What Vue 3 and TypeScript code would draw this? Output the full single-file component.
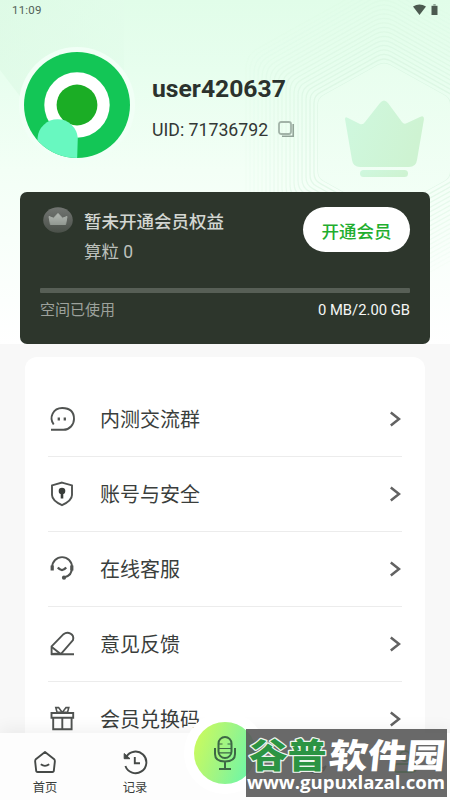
<script setup lang="ts">
interface MenuItem {
  label: string
  icon: string
}

const menu: MenuItem[] = [
  { label: '内测交流群', icon: 'chat' },
  { label: '账号与安全', icon: 'shield' },
  { label: '在线客服', icon: 'support' },
  { label: '意见反馈', icon: 'pencil' },
  { label: '会员兑换码', icon: 'gift' },
]

const rings = Array.from({ length: 19 }, (_, i) => ({
  scale: 1 + (i * 4) / 66,
  opacity: 0.5 - i * 0.024,
  stroke: 1.3 / (1 + (i * 4) / 66),
}))
</script>

<template>
  <div class="screen">
    <header class="hero">
      <svg class="backdrop" width="450" height="344" viewBox="0 0 450 344">
        <defs>
          <linearGradient id="slab" x1="0" y1="0" x2="0" y2="1">
            <stop offset="0" stop-color="#e0fae7" />
            <stop offset="1" stop-color="#dcf8e3" />
          </linearGradient>
          <linearGradient id="slabFade" x1="0" y1="0" x2="1" y2="0">
            <stop offset="0" stop-color="#dcf9e4" />
            <stop offset="1" stop-color="#e2fcea" />
          </linearGradient>
          <linearGradient id="hex" x1="0" y1="0" x2="0" y2="1">
            <stop offset="0" stop-color="#e8feee" />
            <stop offset="1" stop-color="#f4fff7" />
          </linearGradient>
          <linearGradient id="crown" x1="0" y1="0" x2="1" y2="0.3">
            <stop offset="0" stop-color="#cff8df" />
            <stop offset="1" stop-color="#cef3d2" />
          </linearGradient>
        </defs>
        <path d="M0 0H124V78L76 106 22 99 0 70Z" fill="url(#slabFade)" opacity=".6" />
        <g v-for="(r, i) in rings" :key="i" transform="translate(384 138)">
          <path
            :transform="`scale(${r.scale})`"
            d="M-6-73Q0-76 6-73L60-43Q66-40 66-33V33Q66 40 60 43L6 73Q0 76-6 73L-60 43Q-66 40-66 33V-33Q-66-40-60-43Z"
            fill="none"
            stroke="#d0f0d9"
            :stroke-width="r.stroke"
            :opacity="r.opacity"
          />
        </g>
        <path
          transform="translate(384 138)"
          d="M-6-73Q0-76 6-73L60-43Q66-40 66-33V33Q66 40 60 43L6 73Q0 76-6 73L-60 43Q-66 40-66 33V-33Q-66-40-60-43Z"
          fill="url(#hex)"
        />
        <path
          d="M345 119Q345 116 348 118L360 124Q363 125 365 122L380 103Q384 98 388 103L402 122Q404 125 407 123L420 117Q424 115 424 119L417 160Q416 167 409 167H360Q353 167 352 160Z"
          fill="url(#crown)"
        />
        <rect x="360" y="170" width="48" height="7" rx="3.5" fill="url(#crown)" />
      </svg>

      <div class="status">
        <span>11:09</span>
        <svg width="27" height="13" viewBox="0 0 27 13">
          <path d="M0 3.5Q6.5-.5 13 3.5L6.5 12Z" fill="#4c5a50" />
          <path d="M18.5 2.8H24.5V12H18.5Z" fill="#4c5a50" />
          <path d="M20.3 1H22.7V2.8H20.3Z" fill="#8fa596" />
        </svg>
      </div>

      <div class="profile">
        <svg class="avatar" width="116" height="116" viewBox="0 0 116 116">
          <defs>
            <clipPath id="face"><circle cx="58" cy="58" r="53" /></clipPath>
          </defs>
          <circle cx="58" cy="58" r="58" fill="#f1fff6" />
          <g clip-path="url(#face)">
            <rect width="116" height="116" fill="#13c656" />
            <circle cx="58" cy="58" r="32.7" fill="#fff" />
            <circle cx="58" cy="58" r="20.4" fill="#1bad25" />
            <path d="M18.5 91A20.2 20.2 0 0 1 58.8 91L58 116H18.5Z" fill="#68f8c0" />
          </g>
        </svg>
        <div class="identity">
          <div class="name">user420637</div>
          <div class="uid">
            <span>UID: 71736792</span>
            <svg width="17" height="17" viewBox="0 0 17 17" fill="none">
              <path d="M15.2 3V15.2H4" stroke="#91a297" stroke-width="1.6" />
              <rect x="1" y="1" width="12" height="12" rx="2.2" stroke="#a2b3a8" stroke-width="1.8" />
            </svg>
          </div>
        </div>
      </div>

      <section class="plan">
        <div class="plan-top">
          <svg class="badge" width="30" height="26" viewBox="0 0 30 26">
            <defs>
              <linearGradient id="disc" x1="0" y1="0" x2="0" y2="1">
                <stop offset="0" stop-color="#727572" />
                <stop offset="1" stop-color="#4a5049" />
              </linearGradient>
              <linearGradient id="mini" x1="0" y1="0" x2="0" y2="1">
                <stop offset="0" stop-color="#b3b8b3" />
                <stop offset="1" stop-color="#929992" />
              </linearGradient>
            </defs>
            <ellipse cx="15" cy="13" rx="14.8" ry="12.8" fill="url(#disc)" />
            <path d="M6 9.5L10.5 11.2 15 6.5 19.5 11.2 24 9.5 22.6 17.5H7.4Z" fill="url(#mini)" stroke="url(#mini)" stroke-linejoin="round" />
          </svg>
          <div class="plan-text">
            <div class="plan-title">暂未开通会员权益</div>
            <div class="plan-credit">算粒 0</div>
          </div>
          <button class="upgrade">开通会员</button>
        </div>
        <div class="meter"></div>
        <div class="usage">
          <span>空间已使用</span>
          <span class="amount">0 MB/2.00 GB</span>
        </div>
      </section>
    </header>

    <main class="menu">
      <div v-for="item in menu" :key="item.label" class="row">
        <svg class="row-icon" width="28" height="28" viewBox="0 0 28 28" fill="none" stroke="#505351" stroke-width="1.9">
          <g v-if="item.icon === 'chat'">
            <path d="M5.7 19.5C.6 12.5 5.2 3 14.2 3S26 8.4 26 14 21.6 24.8 15.5 24.8H3" />
            <path d="M10.8 12.5V15.5M16.8 12.5V15.5" stroke-width="2.3" />
          </g>
          <g v-else-if="item.icon === 'shield'">
            <path d="M14 2.6L24 5.4V15Q24 20.5 14 25.2 4 20.5 4 15V5.4Z" />
            <circle cx="14" cy="11" r="3.3" fill="#383c39" stroke="none" />
            <path d="M14 12V18.5" stroke="#383c39" stroke-width="2.6" />
          </g>
          <g v-else-if="item.icon === 'support'">
            <path d="M4.2 14.5V12A9.8 9.8 0 0 1 24 12Q24.5 20.5 16 22.5" />
            <path d="M4.2 10.6V15.6M23.8 10.6V15.6" stroke-width="3.2" />
            <circle cx="16" cy="22.7" r="2.1" fill="#505351" stroke="none" />
            <path d="M9.8 12.5Q14 17.6 18.2 12.5" stroke-width="2.2" />
          </g>
          <g v-else-if="item.icon === 'pencil'">
            <path d="M3.6 16.3L15.5 4.2Q18.8 1.8 22.5 3.6T25 10L13.5 23.4 3.6 24Z" />
            <path d="M3.8 17L12.3 23.8M3 24.3H26" />
          </g>
          <g v-else>
            <path d="M3.5 8H25.2V12.8H3.5ZM5.2 12.8H23.6V24.3H5.2ZM14.3 12.8V24" />
            <path d="M14.3 7.5L9 7 7.8 2.6 10.6 2.6 14.3 7.5 18 2.6 20.8 2.6 19.6 7Z" stroke-width="1.6" />
          </g>
        </svg>
        <span class="row-label">{{ item.label }}</span>
        <svg class="chevron" width="11" height="16" viewBox="0 0 11 16" fill="none" stroke="#626262" stroke-width="2.5">
          <path d="M.8 1.5L9 8 .8 14.5" />
        </svg>
      </div>
    </main>

    <nav class="tabs">
      <div class="tab">
        <svg width="26" height="26" viewBox="0 0 26 26" fill="none" stroke="#454947" stroke-width="1.9" stroke-linejoin="round">
          <path d="M13 3L22.2 10.2Q23 11 22.8 13L21.8 22Q21.6 23 20.5 23H5.5Q4.4 23 4.2 22L3.2 13Q3 11 3.8 10.2Z" />
          <path d="M8.8 15.3Q13 18.5 17.2 15.3" />
        </svg>
        <span>首页</span>
      </div>
      <div class="tab">
        <svg width="26" height="26" viewBox="0 0 26 26" fill="none" stroke="#454947" stroke-width="1.9">
          <path d="M4.2 8A10.8 10.8 0 1 1 3.4 17" />
          <path d="M2.2 4.5V9.7H8Z" fill="#454947" stroke-width="1" />
          <path d="M12.8 8V14.2H18" />
        </svg>
        <span>记录</span>
      </div>
      <div class="record">
        <div class="record-disc">
          <svg width="24" height="38" viewBox="0 0 24 38" fill="none" stroke="#3d6745" stroke-width="2">
            <rect x="5.5" y="3" width="13" height="21" rx="6.5" />
            <path d="M6 10H9.5M14.5 10H18M6 14.5H18M6 18.8H18" stroke-width="1.2" />
            <path d="M2 14V20Q2 27.5 12 27.5T22 20V14M12 28V34.5M6 35H18" />
          </svg>
        </div>
      </div>
      <div class="tab">
        <svg width="26" height="26" viewBox="0 0 26 26" fill="none" stroke="#454947" stroke-width="1.8">
          <path d="M20 6Q13 0 9 6T12 14M5 15Q12 11 16 16T24 17Q21 25 13 24T5 15Z" />
        </svg>
      </div>
      <div class="tab">
        <svg width="26" height="26" viewBox="0 0 26 26" fill="none" stroke="#1bad25" stroke-width="1.8">
          <circle cx="13" cy="7" r="5" />
          <path d="M6 15H20Q24 15 24 19T20 23H6Q2 23 2 19T6 15Z" />
        </svg>
      </div>
    </nav>

    <aside class="site">
      <svg width="201" height="68" viewBox="0 0 201 68">
        <g font-family="'Noto Sans CJK SC', sans-serif" font-weight="900" stroke-linejoin="round">
          <text transform="translate(3 38.5) scale(1.14 1)" font-size="34" fill="#2b9443" stroke="#eef5ef" stroke-width="2.4" paint-order="stroke">谷普</text>
          <text transform="translate(82 38.5) skewX(-6) scale(1.14 1)" font-size="34" fill="#fff">软件园</text>
        </g>
        <text x="1" y="60" textLength="198" lengthAdjust="spacingAndGlyphs" font-family="'Open Sans', sans-serif" font-weight="700" font-size="18" fill="#fff">www.gupuxlazal.com</text>
      </svg>
    </aside>
  </div>
</template>

<style>
body {
  margin: 0;
}
</style>

<style scoped>
.screen {
  position: relative;
  width: 450px;
  height: 800px;
  overflow: hidden;
  background: #f8f8f8;
  font-family: Roboto, 'Noto Sans CJK SC', sans-serif;
  color: #333735;
}
.hero {
  position: relative;
  box-sizing: border-box;
  height: 344px;
  background: linear-gradient(180deg, #e1fde9 0, #e7feee 70px, #f3fff6 170px, #f8fffa 240px, #fff 344px);
}
.backdrop {
  position: absolute;
  inset: 0;
}
.status {
  position: relative;
  display: flex;
  justify-content: space-between;
  align-items: center;
  box-sizing: border-box;
  height: 20px;
  padding: 0 10px 0 12px;
  font-size: 11.5px;
  letter-spacing: 0.2px;
  color: #526057;
}
.status svg {
  margin-top: -2px;
}
.profile {
  position: relative;
  display: flex;
  gap: 17px;
  padding: 27px 0 0 19px;
}
.avatar {
  flex: none;
}
.identity {
  padding-top: 25px;
}
.name {
  font-size: 24.7px;
  line-height: 34px;
  font-weight: 700;
  color: #2b322d;
}
.uid {
  display: flex;
  align-items: center;
  gap: 10px;
  margin-top: 14px;
  font-size: 17.7px;
  line-height: 20px;
}
.uid svg {
  margin-top: -2px;
}
.plan {
  position: relative;
  box-sizing: border-box;
  height: 152px;
  margin: 29px 20px 0;
  padding: 15px 20px 0;
  border-radius: 7px;
  background: #2d362c;
}
.plan-top {
  display: flex;
  align-items: flex-start;
  height: 81px;
}
.badge {
  margin-left: 3px;
}
.plan-text {
  flex: 1;
  padding-left: 11px;
}
.plan-title {
  font-size: 17.5px;
  line-height: 30px;
  font-weight: 500;
  color: #d3d6d2;
}
.plan-credit {
  padding-top: 1px;
  font-size: 17.5px;
  line-height: 28px;
  color: #bdc1bc;
}
.upgrade {
  width: 107px;
  height: 45px;
  padding: 1px 0 0;
  border: 0;
  border-radius: 23px;
  background: #fff;
  font: 500 17.5px 'Noto Sans CJK SC', sans-serif;
  color: #1fae2f;
}
.meter {
  height: 5px;
  border-radius: 1px;
  background: #575f56;
}
.usage {
  display: flex;
  justify-content: space-between;
  align-items: center;
  height: 30px;
  font-size: 15px;
  color: #9da29c;
}
.amount {
  padding-top: 4px;
  font-size: 14.8px;
  color: #f5f6f5;
}
.menu {
  box-sizing: border-box;
  height: 460px;
  margin: 13px 25px 0;
  padding: 25px 23px 0;
  border-radius: 12px;
  background: #fff;
}
.row {
  display: flex;
  align-items: center;
  box-sizing: border-box;
  height: 75px;
  border-bottom: 1px solid #ececec;
}
.row-icon {
  flex: none;
}
.row-label {
  flex: 1;
  padding: 2px 0 0 24px;
  font-size: 20px;
  line-height: 30px;
  color: #3a3e3c;
}
.chevron {
  margin-right: 1px;
}
.tabs {
  position: absolute;
  left: 0;
  bottom: 0;
  display: grid;
  grid-template-columns: repeat(5, 1fr);
  width: 450px;
  height: 67px;
  background: #fdfdfd;
  box-shadow: 0 -4px 16px rgba(0, 0, 0, 0.06);
}
.tab {
  display: flex;
  flex-direction: column;
  align-items: center;
  padding-top: 16px;
  font-size: 12.3px;
  line-height: 27px;
  color: #3a3e3b;
}
.record {
  display: flex;
  align-items: center;
  justify-content: center;
  width: 82px;
  height: 82px;
  margin: -21px 0 0 4px;
  border-radius: 50%;
  background: #fff;
}
.record-disc {
  display: flex;
  align-items: center;
  justify-content: center;
  width: 62px;
  height: 62px;
  border-radius: 50%;
  background: linear-gradient(110deg, #c7fa60 10%, #9df586 50%, #6af7a9 90%);
}
.site {
  position: absolute;
  left: 246px;
  top: 729px;
  width: 201px;
  height: 68px;
  background: rgba(90, 90, 90, 0.91);
}
.site svg {
  display: block;
}
</style>
